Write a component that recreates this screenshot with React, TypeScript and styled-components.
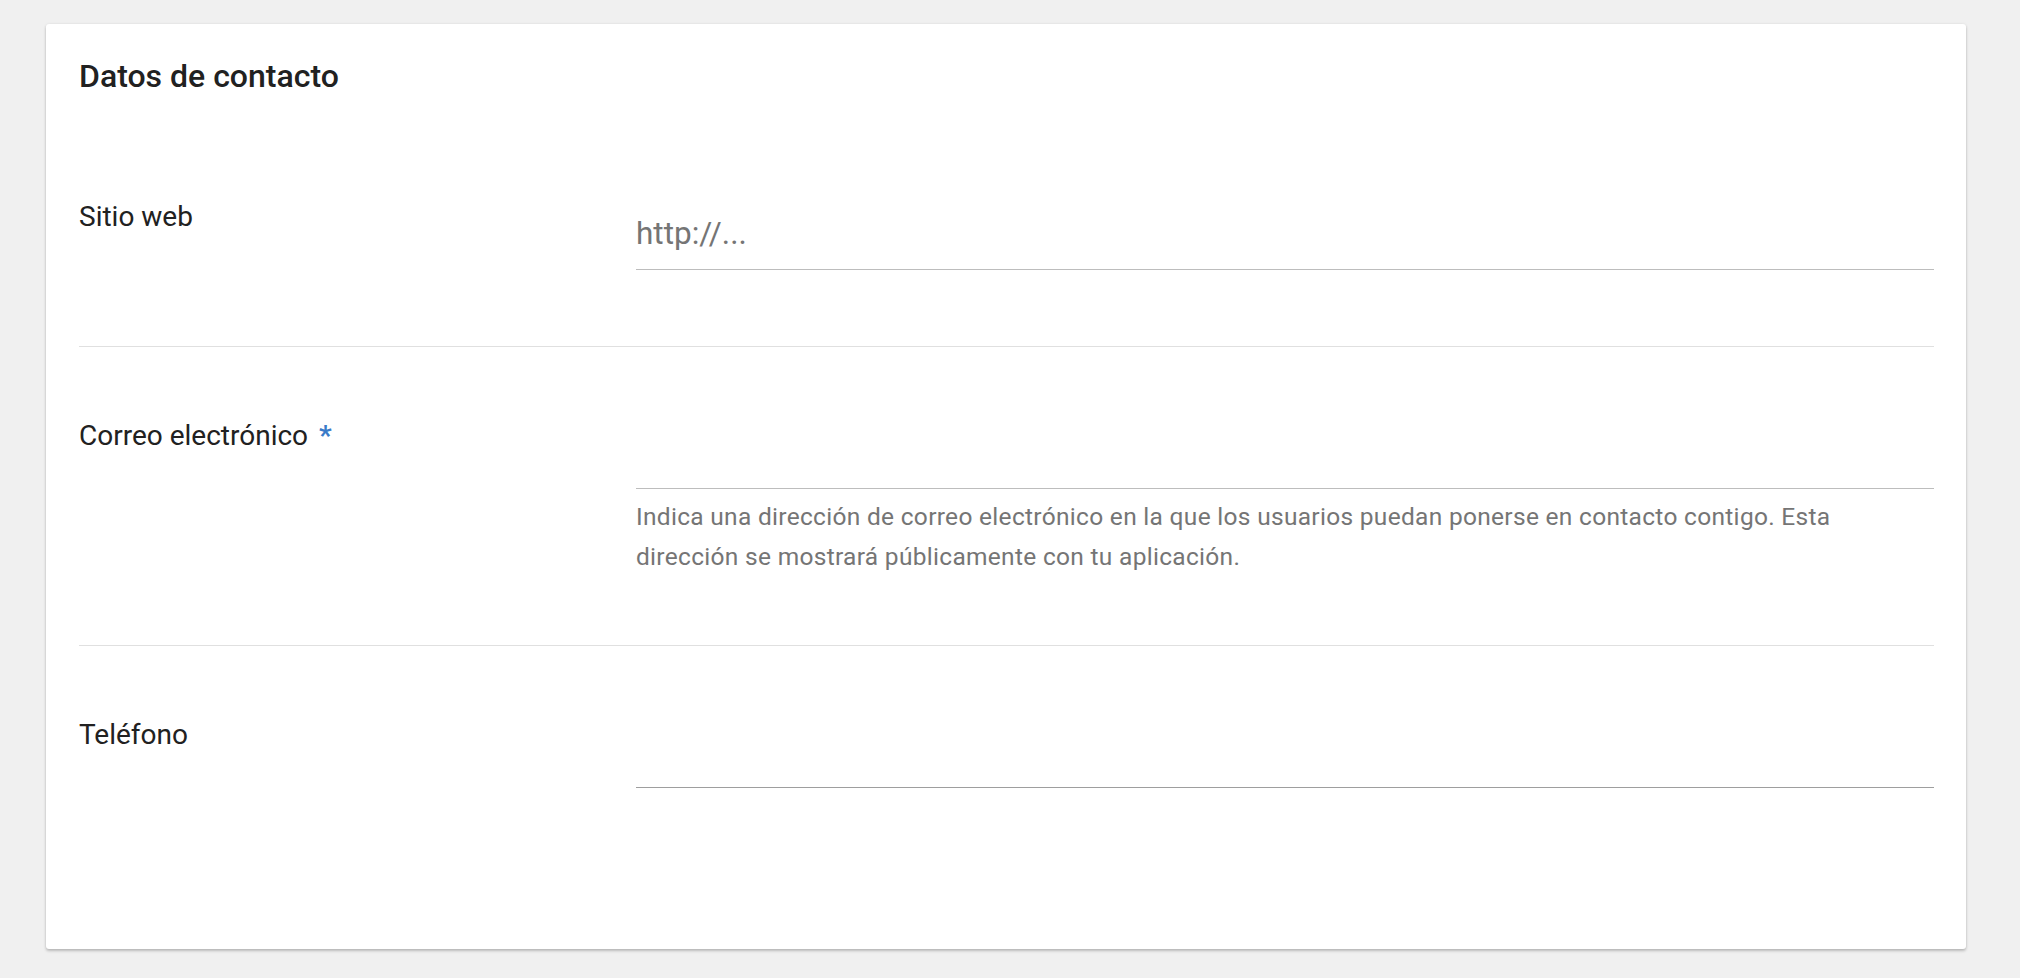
import React from "react";
import styled, { createGlobalStyle } from "styled-components";

const GlobalStyle = createGlobalStyle`
  html, body {
    margin: 0;
    padding: 0;
    background: #f0f0f0;
  }
  body {
    font-family: Roboto, "Liberation Sans", Arial, sans-serif;
    -webkit-font-smoothing: antialiased;
  }
  * { box-sizing: border-box; }
`;

const Page = styled.div`
  min-height: 978px;
  padding: 24px 0 29px 46px;
`;

const Card = styled.section`
  width: 1920px;
  background: #ffffff;
  border-radius: 3px;
  box-shadow: 0 2px 3px rgba(0, 0, 0, 0.22), 0 0 3px rgba(0, 0, 0, 0.08);
  padding: 34px 32px 85px 33px;
`;

const Title = styled.h2`
  margin: 0 0 34px 0;
  font-size: 32px;
  line-height: 36px;
  font-weight: 500;
  color: #212121;
`;

const Row = styled.div<{ $last?: boolean }>`
  display: grid;
  grid-template-columns: 557px 1fr;
  padding: 73px 0 68px 0;
  border-bottom: ${(p) => (p.$last ? "none" : "1px solid #e0e0e0")};
`;

const Label = styled.div`
  font-size: 28px;
  line-height: 32px;
  color: #212121;
`;

const Required = styled.span`
  color: #3a7bc8;
  font-weight: 700;
  margin-left: 11px;
`;

const Control = styled.div`
  padding-top: 14px;
`;

const FieldWrap = styled.div`
  padding-bottom: 8px;
`;

const Input = styled.input<{ $dark?: boolean }>`
  display: block;
  width: 100%;
  height: 55px;
  margin: 0;
  padding: 0 0 18px 0;
  border: none;
  border-bottom: 1px solid ${(p) => (p.$dark ? "#9e9e9e" : "#bdbdbd")};
  background: transparent;
  outline: none;
  font-family: Roboto, "Liberation Sans", Arial, sans-serif;
  font-size: 31.5px;
  line-height: 36px;
  color: #212121;
  &::placeholder {
    color: #757575;
    opacity: 1;
  }
`;

const Help = styled.p`
  margin: 0;
  font-size: 24.5px;
  letter-spacing: 0.3px;
  line-height: 40px;
  color: #757575;
`;

export default function App() {
  return (
    <>
      <GlobalStyle />
      <Page>
        <Card>
          <Title>Datos de contacto</Title>
          <Row>
            <Label>Sitio web</Label>
            <Control>
              <FieldWrap>
                <Input type="text" placeholder="http://..." />
              </FieldWrap>
            </Control>
          </Row>
          <Row>
            <Label>
              Correo electrónico<Required>*</Required>
            </Label>
            <Control>
              <FieldWrap>
                <Input type="email" />
              </FieldWrap>
              <Help>
                Indica una dirección de correo electrónico en la que los usuarios puedan
                ponerse en contacto contigo. Esta dirección se mostrará públicamente con tu
                aplicación.
              </Help>
            </Control>
          </Row>
          <Row $last>
            <Label>Teléfono</Label>
            <Control>
              <FieldWrap>
                <Input type="tel" $dark />
              </FieldWrap>
            </Control>
          </Row>
        </Card>
      </Page>
    </>
  );
}
